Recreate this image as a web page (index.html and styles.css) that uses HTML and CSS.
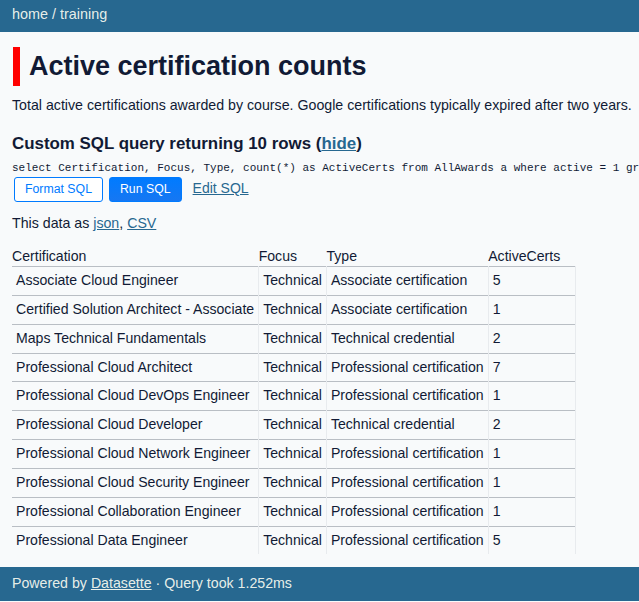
FILE: index.html
```html
<!DOCTYPE html>
<html lang="en">
<head>
<meta charset="utf-8">
<title>training: Active certification counts</title>
<link rel="stylesheet" href="styles.css">
</head>
<body>
<header class="top-bar">
  <p class="crumbs"><a href="#">home</a> / <a href="#">training</a></p>
</header>
<section class="content">
  <div class="page-header"><h1>Active certification counts</h1></div>
  <p class="description">Total active certifications awarded by course. Google certifications typically expired after two years.</p>
  <h3 class="query-title">Custom SQL query returning 10 rows <span class="show-hide">(<a href="#">hide</a>)</span></h3>
  <pre class="sql">select Certification, Focus, Type, count(*) as ActiveCerts from AllAwards a where active = 1 gr</pre>
  <div class="actions">
    <button type="button" class="btn btn-outline">Format SQL</button>
    <button type="button" class="btn btn-primary">Run SQL</button>
    <a href="#" class="edit-link">Edit SQL</a>
  </div>
  <p class="export">This data as <a href="#">json</a>, <a href="#">CSV</a></p>
  <table class="rows">
    <thead>
      <tr><th>Certification</th><th>Focus</th><th>Type</th><th>ActiveCerts</th></tr>
    </thead>
    <tbody>
      <tr><td>Associate Cloud Engineer</td><td>Technical</td><td>Associate certification</td><td>5</td></tr>
      <tr><td>Certified Solution Architect - Associate</td><td>Technical</td><td>Associate certification</td><td>1</td></tr>
      <tr><td>Maps Technical Fundamentals</td><td>Technical</td><td>Technical credential</td><td>2</td></tr>
      <tr><td>Professional Cloud Architect</td><td>Technical</td><td>Professional certification</td><td>7</td></tr>
      <tr><td>Professional Cloud DevOps Engineer</td><td>Technical</td><td>Professional certification</td><td>1</td></tr>
      <tr><td>Professional Cloud Developer</td><td>Technical</td><td>Technical credential</td><td>2</td></tr>
      <tr><td>Professional Cloud Network Engineer</td><td>Technical</td><td>Professional certification</td><td>1</td></tr>
      <tr><td>Professional Cloud Security Engineer</td><td>Technical</td><td>Professional certification</td><td>1</td></tr>
      <tr><td>Professional Collaboration Engineer</td><td>Technical</td><td>Professional certification</td><td>1</td></tr>
      <tr><td>Professional Data Engineer</td><td>Technical</td><td>Professional certification</td><td>5</td></tr>
    </tbody>
  </table>
</section>
<footer class="bottom-bar">
  Powered by <a href="#">Datasette</a> &middot; Query took 1.252ms
</footer>
</body>
</html>
```
FILE: styles.css
```css
html, body {
  margin: 0;
  padding: 0;
}
body {
  font-family: "Liberation Sans", Arial, sans-serif;
  font-size: 14.2px;
  line-height: 19.5px;
  color: #111a35;
  background-color: #f8fafb;
  overflow-x: hidden;
}
a {
  color: #276890;
  text-decoration: underline;
}
.top-bar {
  background-color: #276890;
  color: rgba(255, 255, 244, 0.9);
  height: 32px;
  box-sizing: border-box;
  padding: 5px 12px 0;
  font-size: 14.4px;
}
.crumbs {
  margin: 0;
}
.crumbs a {
  color: rgba(255, 255, 244, 0.9);
  text-decoration: none;
}
.content {
  padding: 0 4px 0 12px;
}
.page-header {
  margin-top: 15px;
  margin-left: 1px;
  border-left: 7px solid #ff0000;
  padding-left: 9px;
  height: 39px;
}
.page-header h1 {
  margin: 0;
  font-size: 27px;
  line-height: 39px;
  font-weight: 700;
}
.description {
  margin: 10px 0 0;
  white-space: nowrap;
}
.query-title {
  margin: 15px 0 0;
  font-size: 16.9px;
  line-height: 26px;
  font-weight: 700;
}
.show-hide a {
  color: #276890;
}
.sql {
  margin: 4px -4px 0 0;
  font-family: "Liberation Mono", "Courier New", monospace;
  font-size: 11px;
  line-height: 14px;
  white-space: pre;
  overflow: hidden;
}
.actions {
  display: flex;
  align-items: center;
  gap: 6px;
  margin-top: 2px;
  padding-left: 2px;
}
.btn {
  font-family: inherit;
  font-size: 12.3px;
  line-height: 1;
  padding: 0 10px;
  border: 1px solid #007bff;
  border-radius: 3px;
  height: 25px;
  box-sizing: border-box;
}
.btn-outline {
  color: #007bff;
  background-color: #fff;
}
.btn-primary {
  color: #fff;
  background: linear-gradient(180deg, #007bff 0%, #1677f2 100%);
}
.edit-link {
  margin-left: 5px;
  font-size: 14px;
}
.export {
  margin: 12px 0 0;
}
.rows {
  border-collapse: collapse;
  margin-top: 13px;
  font-size: 14.1px;
}
.rows th {
  text-align: left;
  font-weight: 400;
  padding: 0 15px 0 0;
  line-height: 20px;
}
.rows td {
  border-top: 1px solid #b9bec4;
  border-right: 1px solid #e8ebee;
  padding: 4px;
  line-height: 19.85px;
  vertical-align: top;
  white-space: nowrap;
}
.bottom-bar {
  margin-top: 13px;
  background-color: #276890;
  color: rgba(255, 255, 244, 0.9);
  padding: 7px 12px 0;
  height: 34px;
  box-sizing: border-box;
}
.bottom-bar a {
  color: rgba(255, 255, 244, 0.9);
}
```
